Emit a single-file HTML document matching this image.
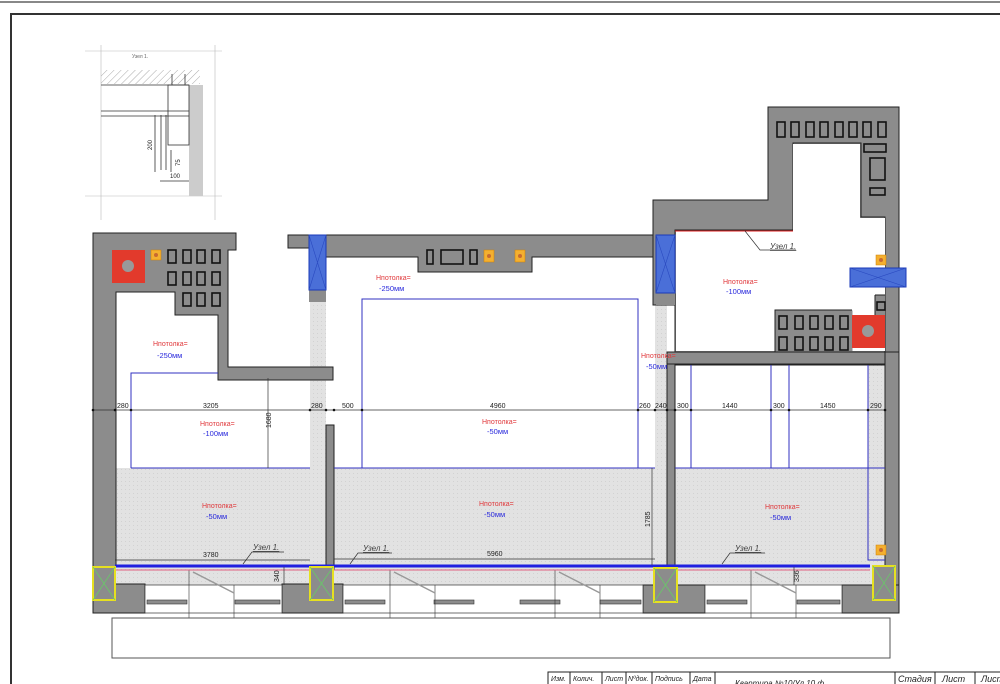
<!DOCTYPE html>
<html><head><meta charset="utf-8"><style>
html,body{margin:0;padding:0;background:#fff;width:1000px;height:684px;overflow:hidden}
svg{display:block}
text{font-family:"Liberation Sans",sans-serif}
.r{fill:#e0393c;font-size:7px}
.b{fill:#2a2adc;font-size:7.5px}
.d{fill:#222;font-size:7px}
.u{fill:#444;font-size:8px;font-style:italic;text-decoration:underline}
.t{fill:#222;font-size:7px;font-style:italic}
</style></head><body>
<svg width="1000" height="684" viewBox="0 0 1000 684" xmlns="http://www.w3.org/2000/svg">
<rect width="1000" height="684" fill="#fff"/>
<line x1="0" y1="2" x2="1000" y2="2" stroke="#888" stroke-width="2"/>
<path d="M11 684V14H1000" fill="none" stroke="#333" stroke-width="2"/>

<defs><pattern id="h" width="5" height="5" patternUnits="userSpaceOnUse" patternTransform="rotate(45)"><line x1="0" y1="0" x2="0" y2="5" stroke="#aaa" stroke-width="1"/></pattern>
<pattern id="dots" width="4" height="4" patternUnits="userSpaceOnUse"><rect width="4" height="4" fill="#e2e2e2"/><rect x="1" y="1" width="1" height="1" fill="#d2d2d2"/></pattern></defs>
<!-- inset detail -->
<g stroke="#bbb" stroke-width="0.6" fill="none">
<line x1="85" y1="51" x2="222" y2="51"/><line x1="85" y1="196" x2="222" y2="196"/>
<line x1="101" y1="45" x2="101" y2="220"/><line x1="215" y1="45" x2="215" y2="220"/>
</g>
<rect x="101" y="70" width="99" height="14" fill="url(#h)"/>
<rect x="189" y="85" width="14" height="111" fill="#ccc"/>
<g stroke="#333" stroke-width="0.8" fill="none">
<line x1="101" y1="85" x2="189" y2="85"/><line x1="101" y1="111" x2="189" y2="111"/><line x1="101" y1="116" x2="189" y2="116"/>
<rect x="168" y="85" width="21" height="60"/><line x1="172" y1="74" x2="172" y2="85"/><line x1="185" y1="74" x2="185" y2="85"/>
<line x1="161" y1="115" x2="161" y2="170"/><line x1="166" y1="115" x2="166" y2="170"/>
<line x1="155" y1="115" x2="155" y2="172"/><line x1="160" y1="181" x2="189" y2="181"/>
<line x1="171" y1="150" x2="171" y2="172"/>
</g>
<text x="132" y="58" style="font-size:5px;fill:#666">Узел 1.</text>
<text x="152" y="150" transform="rotate(-90 152 150)" style="font-size:6px;fill:#222">200</text>
<text x="180" y="166" transform="rotate(-90 180 166)" style="font-size:6px;fill:#222">75</text>
<text x="170" y="178" style="font-size:6px;fill:#222">100</text>

<!-- floor light zones -->
<rect x="115" y="468" width="195" height="117" fill="url(#dots)"/>
<rect x="334" y="468" width="321" height="117" fill="url(#dots)"/>
<rect x="675" y="468" width="210" height="117" fill="url(#dots)"/>
<rect x="310" y="302" width="16" height="268" fill="url(#dots)"/>
<rect x="655" y="305" width="12" height="265" fill="url(#dots)"/>
<rect x="868" y="365" width="17" height="205" fill="url(#dots)"/>

<g fill="#8c8c8c" stroke="#222" stroke-width="1">
<path d="M93 233H236V250H228V367H333V380H218V315H175V292H116V567H93Z"/>
<path d="M288 235H655V257H532V272H418V257H309V248H288Z"/>
<path d="M653 200H768V107H899V613H885V352H667V362H675V230H793V143H861V217H885V352H885V365H667V352H675V305H653Z"/>
<rect x="326" y="425" width="8" height="145"/>
<rect x="667" y="362" width="8" height="208"/>
<rect x="885" y="352" width="14" height="261"/>
<rect x="667" y="352" width="218" height="12"/>
<rect x="93" y="584" width="52" height="29"/>
<rect x="282" y="584" width="61" height="29"/>
<rect x="643" y="585" width="62" height="28"/>
<rect x="842" y="585" width="57" height="28"/>
</g>
<rect x="676" y="231" width="209" height="120" fill="#fff"/>
<rect x="793" y="144" width="67" height="90" fill="#fff"/>
<rect x="860" y="218" width="25" height="20" fill="#fff"/>
<path d="M775 351V310H852" fill="#8c8c8c" stroke="#222" stroke-width="1"/>
<rect x="775.5" y="310.5" width="77" height="41" fill="#8c8c8c"/>
<line x1="775" y1="310" x2="775" y2="352" stroke="#222"/><line x1="775" y1="310" x2="852" y2="310" stroke="#222"/>
<rect x="875" y="295" width="10" height="20" fill="#8c8c8c"/>
<line x1="875" y1="295" x2="885" y2="295" stroke="#222"/><line x1="875" y1="295" x2="875" y2="315" stroke="#222"/>
<rect x="309" y="290" width="17" height="12" fill="#8c8c8c"/>
<rect x="656" y="293" width="19" height="12" fill="#8c8c8c"/>

<!-- vents -->
<g fill="none" stroke="#111" stroke-width="1.6">
<rect x="168" y="250" width="8" height="13"/><rect x="183" y="250" width="8" height="13"/><rect x="197" y="250" width="8" height="13"/><rect x="212" y="250" width="8" height="13"/>
<rect x="168" y="272" width="8" height="13"/><rect x="183" y="272" width="8" height="13"/><rect x="197" y="272" width="8" height="13"/><rect x="212" y="272" width="8" height="13"/>
<rect x="183" y="293" width="8" height="13"/><rect x="197" y="293" width="8" height="13"/><rect x="212" y="293" width="8" height="13"/>
<rect x="427" y="250" width="6" height="14"/><rect x="441" y="250" width="22" height="14"/><rect x="470" y="250" width="7" height="14"/>
<rect x="777" y="122" width="8" height="15"/><rect x="791" y="122" width="8" height="15"/><rect x="806" y="122" width="8" height="15"/><rect x="820" y="122" width="8" height="15"/><rect x="835" y="122" width="8" height="15"/><rect x="849" y="122" width="8" height="15"/><rect x="863" y="122" width="8" height="15"/><rect x="878" y="122" width="8" height="15"/>
<rect x="864" y="144" width="22" height="8"/><rect x="870" y="158" width="15" height="22"/><rect x="870" y="188" width="15" height="7"/>
<rect x="877" y="302" width="8" height="8"/>
<rect x="779" y="316" width="8" height="13"/><rect x="795" y="316" width="8" height="13"/><rect x="810" y="316" width="8" height="13"/><rect x="825" y="316" width="8" height="13"/><rect x="840" y="316" width="8" height="13"/>
<rect x="779" y="337" width="8" height="13"/><rect x="795" y="337" width="8" height="13"/><rect x="810" y="337" width="8" height="13"/><rect x="825" y="337" width="8" height="13"/><rect x="840" y="337" width="8" height="13"/>
</g>
<g fill="#f4b030" stroke="#d08000" stroke-width="0.5">
<rect x="151" y="250" width="10" height="10"/><rect x="484" y="250" width="10" height="12"/><rect x="515" y="250" width="10" height="12"/>
<rect x="876" y="255" width="10" height="10"/><rect x="876" y="545" width="10" height="10"/>
</g>
<g fill="#c86a30"><circle cx="156" cy="255" r="2"/><circle cx="489" cy="256" r="2"/><circle cx="520" cy="256" r="2"/><circle cx="881" cy="260" r="2"/><circle cx="881" cy="550" r="2"/></g>
<rect x="112" y="250" width="33" height="33" fill="#e23a2c"/><circle cx="128" cy="266" r="6" fill="#999"/>
<rect x="852" y="315" width="33" height="33" fill="#e23a2c"/><circle cx="868" cy="331" r="6" fill="#999"/>
<g fill="#4a6fd8" stroke="#1a3ab8" stroke-width="1">
<rect x="309" y="235" width="17" height="55"/><rect x="656" y="235" width="19" height="58"/><rect x="850" y="268" width="56" height="19"/>
</g>
<g stroke="#2a4ac0" stroke-width="0.6"><path d="M309 235L326 290M326 235L309 290M656 235L675 293M675 235L656 293M850 268L906 287M906 268L850 287"/></g>

<!-- bottom windows -->
<g fill="#fff" stroke="#333" stroke-width="0.7">
<rect x="145" y="585" width="137" height="28"/><rect x="343" y="585" width="300" height="28"/><rect x="705" y="585" width="137" height="28"/>
</g>
<g fill="#8c8c8c" stroke="#333" stroke-width="0.6">
<rect x="147" y="600" width="40" height="4"/><rect x="235" y="600" width="45" height="4"/><rect x="345" y="600" width="40" height="4"/><rect x="434" y="600" width="40" height="4"/><rect x="520" y="600" width="40" height="4"/><rect x="600" y="600" width="41" height="4"/><rect x="707" y="600" width="40" height="4"/><rect x="797" y="600" width="43" height="4"/>
</g>
<g stroke="#333" stroke-width="0.6" fill="none">
<path d="M189 570V618M234 585V618M390 570V618M435 585V618M555 570V618M600 585V618M751 570V618M796 585V618"/>
<path d="M193 572L234 593M394 572L435 593M559 572L600 593M755 572L796 593" stroke="#999" stroke-width="1.5"/>
</g>
<line x1="115" y1="566" x2="870" y2="566" stroke="#2020e0" stroke-width="3"/>
<line x1="115" y1="570" x2="870" y2="570" stroke="#e06080" stroke-width="1"/>
<line x1="675" y1="231" x2="793" y2="231" stroke="#e02020" stroke-width="1"/>
<g fill="#8c8c8c" stroke="#e6e020" stroke-width="2">
<rect x="93" y="567" width="22" height="33"/><rect x="310" y="567" width="23" height="33"/><rect x="654" y="568" width="23" height="34"/><rect x="873" y="566" width="22" height="34"/>
</g>
<g stroke="#6c6" stroke-width="0.7"><path d="M93 567L115 600M115 567L93 600M310 567L333 600M333 567L310 600M654 568L677 602M677 568L654 602M873 566L895 600M895 566L873 600"/></g>

<g fill="none" stroke="#3030c0" stroke-width="1">
<path d="M131 468V373H218M131 468H310"/>
<path d="M362 468V299H638V468M334 468H655"/>
<path d="M691 365V468M771 365V468M789 365V468M868 365V560H885M675 468H885"/>
</g>
<g stroke="#333" stroke-width="0.7" fill="none">
<line x1="93" y1="410" x2="885" y2="410"/>
<line x1="268" y1="378" x2="268" y2="468"/>
<line x1="115" y1="560" x2="310" y2="560"/><line x1="334" y1="559" x2="655" y2="559"/>
<line x1="652" y1="468" x2="652" y2="565"/>
<line x1="284" y1="567" x2="284" y2="585"/><line x1="794" y1="567" x2="794" y2="585"/>
<path d="M243 564L252 552H284M350 564L358 553H392M722 564L730 553H765M745 231L760 250H796"/>
</g>
<g fill="#111">
<circle cx="93" cy="410" r="1.3"/><circle cx="115" cy="410" r="1.3"/><circle cx="131" cy="410" r="1.3"/><circle cx="310" cy="410" r="1.3"/><circle cx="326" cy="410" r="1.3"/><circle cx="334" cy="410" r="1.3"/><circle cx="362" cy="410" r="1.3"/><circle cx="638" cy="410" r="1.3"/><circle cx="655" cy="410" r="1.3"/><circle cx="667" cy="410" r="1.3"/><circle cx="675" cy="410" r="1.3"/><circle cx="691" cy="410" r="1.3"/><circle cx="771" cy="410" r="1.3"/><circle cx="789" cy="410" r="1.3"/><circle cx="868" cy="410" r="1.3"/><circle cx="885" cy="410" r="1.3"/>
</g>
<g class="d">
<text x="117" y="408">280</text><text x="203" y="408">3205</text><text x="311" y="408">280</text><text x="342" y="408">500</text><text x="490" y="408">4960</text><text x="639" y="408">260</text><text x="655" y="408">240</text><text x="677" y="408">300</text><text x="722" y="408">1440</text><text x="773" y="408">300</text><text x="820" y="408">1450</text><text x="870" y="408">290</text>
<text x="203" y="557">3780</text><text x="487" y="556">5960</text>
<text x="271" y="428" transform="rotate(-90 271 428)">1680</text>
<text x="650" y="527" transform="rotate(-90 650 527)">1785</text>
<text x="279" y="582" transform="rotate(-90 279 582)">340</text>
<text x="799" y="582" transform="rotate(-90 799 582)">336</text>
</g>
<g class="u"><text x="253" y="550">Узел 1.</text><text x="363" y="551">Узел 1.</text><text x="735" y="551">Узел 1.</text><text x="770" y="249">Узел 1.</text></g>
<g>
<text class="r" x="153" y="346">Нпотолка=</text><text class="b" x="157" y="358">-250мм</text>
<text class="r" x="200" y="426">Нпотолка=</text><text class="b" x="203" y="436">-100мм</text>
<text class="r" x="202" y="508">Нпотолка=</text><text class="b" x="206" y="519">-50мм</text>
<text class="r" x="376" y="280">Нпотолка=</text><text class="b" x="379" y="291">-250мм</text>
<text class="r" x="482" y="424">Нпотолка=</text><text class="b" x="487" y="434">-50мм</text>
<text class="r" x="479" y="506">Нпотолка=</text><text class="b" x="484" y="517">-50мм</text>
<text class="r" x="723" y="284">Нпотолка=</text><text class="b" x="726" y="294">-100мм</text>
<text class="r" x="641" y="358">Нпотолка=</text><text class="b" x="646" y="369">-50мм</text>
<text class="r" x="765" y="509">Нпотолка=</text><text class="b" x="770" y="520">-50мм</text>
</g>
<rect x="112" y="618" width="778" height="40" fill="none" stroke="#555" stroke-width="1"/>
<g fill="none" stroke="#222" stroke-width="1">
<path d="M548 684V672H1000M570 672V684M602 672V684M626 672V684M652 672V684M690 672V684M715 672V684M895 672V684M935 672V684M975 672V684"/>
</g>
<g class="t"><text x="551" y="681">Изм.</text><text x="573" y="681">Колич.</text><text x="605" y="681">Лист</text><text x="628" y="681">Nºдок.</text><text x="655" y="681">Подпись</text><text x="693" y="681">Дата</text>
<text x="898" y="682" style="font-size:9px">Стадия</text><text x="942" y="682" style="font-size:9px">Лист</text><text x="981" y="682" style="font-size:9px">Лист</text>
<text x="735" y="686" style="font-size:8px">Квартира №10/Ул.10 ф</text></g>
</svg>
</body></html>
